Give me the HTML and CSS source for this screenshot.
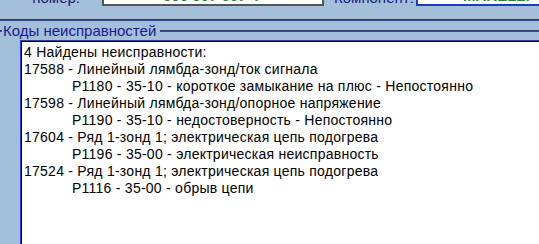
FILE: index.html
```html
<!DOCTYPE html>
<html lang="ru">
<head>
    <meta charset="UTF-8">
    <title>Коды неисправностей</title>
    <link rel="stylesheet" href="styles.css">
</head>
<body>

<div class="top">
    <span class="label label-vag">VAG номер:</span>
    <div class="field field-vag">000 007 007 4</div>
    <span class="label label-comp">Компонент:</span>
    <div class="field field-comp">MARELLI</div>
</div>

<div class="divider"></div>

<div class="group">
    <div class="group-head">
        <span class="group-cap"></span>
        <span class="group-title">Коды неисправностей</span>
        <span class="group-line"></span>
    </div>

    <div class="list">
        <div class="row">4 Найдены неисправности:</div>
        <div class="row">17588 - Линейный лямбда-зонд/ток сигнала</div>
        <div class="row sub">P1180 - 35-10 - короткое замыкание на плюс - Непостоянно</div>
        <div class="row">17598 - Линейный лямбда-зонд/опорное напряжение</div>
        <div class="row sub">P1190 - 35-10 - недостоверность - Непостоянно</div>
        <div class="row">17604 - Ряд 1-зонд 1; электрическая цепь подогрева</div>
        <div class="row sub">P1196 - 35-00 - электрическая неисправность</div>
        <div class="row">17524 - Ряд 1-зонд 1; электрическая цепь подогрева</div>
        <div class="row sub">P1116 - 35-00 - обрыв цепи</div>
    </div>
</div>

</body>
</html>
```

FILE: styles.css
```css
body {
    margin: 0;
    height: 244px;
    overflow: hidden;
    background-color: #a4bfd9;
    font-family: "Liberation Sans", Arial, sans-serif;
}

.top {
    display: flex;
    align-items: flex-end;
    height: 6px;
    overflow: hidden;
}

.label {
    color: #1a1a8a;
    font-size: 15px;
    line-height: 16px;
}

.label-vag {
    width: 80px;
    text-align: right;
    margin-right: 22px;
}

.label-comp {
    width: 79px;
    padding-right: 3px;
    text-align: right;
    margin-left: 10px;
}

.field {
    height: 22px;
    background-color: #fff;
    color: #00a000;
    font-size: 15px;
    font-weight: bold;
    line-height: 20px;
    box-sizing: border-box;
}

.field-vag {
    width: 222px;
    border: 2px solid #555;
    padding-left: 59px;
}

.field-comp {
    flex: 1;
    border: 2px solid #1a3cc8;
    border-right: none;
    padding-left: 45px;
}

.divider {
    margin-top: 13px;
    border-top: 1px solid #3e4150;
    border-bottom: 1px solid #2c48a8;
}

.group-head {
    display: flex;
    align-items: center;
    height: 19px;
}

.group-cap {
    width: 2px;
    height: 0;
    border-top: 1px solid #3e4150;
    border-bottom: 1px solid #2c48a8;
}

.group-title {
    color: #1a1a8a;
    font-size: 15px;
    padding: 0 4px 0 1px;
}

.group-line {
    flex: 1;
    height: 0;
    border-top: 1px solid #3e4150;
    border-bottom: 1px solid #2c48a8;
}

.list {
    margin-left: 20px;
    height: 200px;
    background-color: #fff;
    border-left: 1px solid #1a3cdc;
    border-top: 1px solid #1a3cdc;
    box-shadow: inset 1px 1px 0 #000;
    padding: 3px 0 0 3px;
    font-size: 14px;
    line-height: 17px;
    letter-spacing: 0.25px;
    color: #000;
}

.row.sub {
    padding-left: 48px;
}
```
